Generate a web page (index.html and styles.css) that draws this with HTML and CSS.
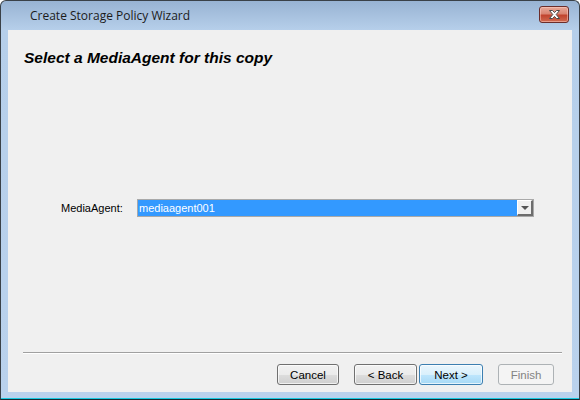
FILE: index.html
```html
<!DOCTYPE html>
<html lang="en">
<head>
  <meta charset="UTF-8">
  <title>Create Storage Policy Wizard</title>
  <link rel="stylesheet" href="styles.css">
</head>
<body>
  <div class="ventana">
    <div class="barraTitulo">
      <span class="titulo">Create Storage Policy Wizard</span>
      <button class="cerrar" aria-label="Close">
        <svg width="13" height="9" viewBox="0 0 13 9">
          <path d="M1.5 0.5 H4.5 L6.5 2.6 L8.5 0.5 H11.5 L8.2 4.5 L11.5 8.5 H8.5 L6.5 6.4 L4.5 8.5 H1.5 L4.8 4.5 Z" fill="#fff" stroke="#4a4a4a" stroke-width="1" stroke-linejoin="round"/>
        </svg>
      </button>
    </div>
    <div class="cliente">
      <h1 class="encabezado">Select a MediaAgent for this copy</h1>

      <div class="principal">
        <div class="fila">
          <label class="etiqueta" for="agente">MediaAgent:</label>
          <div class="combo" id="agente">
            <span class="comboValor">mediaagent001</span>
            <span class="comboBoton"><span class="flecha"></span></span>
          </div>
        </div>
      </div>

      <div class="pie">
        <div class="separador"></div>
        <div class="botones">
          <button class="boton cancelar">Cancel</button>
          <button class="boton atras">&lt; Back</button>
          <button class="boton activo">Next &gt;</button>
          <button class="boton deshabilitado" disabled>Finish</button>
        </div>
      </div>
    </div>
  </div>
</body>
</html>
```

FILE: styles.css
```css
html, body {
  margin: 0;
  padding: 0;
  background: #ffffff;
}
.ventana {
  width: 580px;
  height: 400px;
  box-sizing: border-box;
  border: 1px solid #3a4148;
  border-bottom-color: #1a2b33;
  border-radius: 6px 6px 0 0;
  padding: 0 7px 7px 7px;
  display: flex;
  flex-direction: column;
  background: linear-gradient(#98b3d3 0, #b6cfea 29px, #bad2ed 100%);
  box-shadow: inset 0 -1px 0 #19c9e0;
  font-family: "Liberation Sans", Arial, sans-serif;
}
.barraTitulo {
  height: 29px;
  display: flex;
  align-items: center;
  justify-content: space-between;
}
.titulo {
  padding-left: 22px;
  font-family: "Open Sans", "Liberation Sans", sans-serif;
  font-size: 12px;
  color: #1b1b1b;
  margin-top: -1px;
}
.cerrar {
  width: 30px;
  height: 17px;
  margin: -3px 3px 0 0;
  padding: 0;
  border: 1px solid #6b2d2a;
  border-radius: 3px;
  background: linear-gradient(#e8a898 0, #d98572 45%, #c1442e 55%, #cf6a50 100%);
  box-shadow: inset 0 0 0 1px rgba(255, 210, 200, 0.5);
  display: flex;
  align-items: center;
  justify-content: center;
}
.cliente {
  flex: 1;
  background: #f0f0f0;
  display: flex;
  flex-direction: column;
}
.encabezado {
  margin: 18px 0 0 16px;
  font-size: 15.5px;
  font-style: italic;
  font-weight: bold;
  line-height: 19px;
  color: #000;
}
.principal {
  flex: 1;
  padding: 132px 0 0 53px;
}
.fila {
  display: flex;
  align-items: center;
  height: 18px;
}
.etiqueta {
  width: 76px;
  font-size: 11px;
  color: #000;
}
.combo {
  width: 397px;
  height: 18px;
  box-sizing: border-box;
  border: 1px solid #a9a9a9;
  background: #3399ff;
  display: flex;
  align-items: center;
}
.comboValor {
  flex: 1;
  padding-left: 1px;
  font-size: 11px;
  color: #ffffff;
}
.comboBoton {
  width: 16px;
  height: 16px;
  box-sizing: border-box;
  background: #f0f0f0;
  border-top: 1px solid #fff;
  border-left: 1px solid #fff;
  border-right: 2px solid #6d6d6d;
  border-bottom: 2px solid #6d6d6d;
  display: flex;
  align-items: center;
  justify-content: center;
}
.flecha {
  width: 0;
  height: 0;
  border-left: 4px solid transparent;
  border-right: 4px solid transparent;
  border-top: 4px solid #555;
  margin-top: 1px;
}
.pie {
  padding: 0 10px 7px 15px;
}
.separador {
  border-top: 1px solid #a0a0a0;
  border-bottom: 1px solid #ffffff;
}
.botones {
  display: flex;
  justify-content: flex-end;
  padding: 10px 8px 0 0;
}
.boton {
  height: 21px;
  width: 63px;
  margin-left: 15px;
  padding: 0;
  border: 1px solid #707070;
  border-radius: 3px;
  background: linear-gradient(#f2f2f2 0, #ebebeb 50%, #dddddd 50%, #cfcfcf 100%);
  box-shadow: inset 0 0 0 1px rgba(255, 255, 255, 0.7);
  font-family: "Liberation Sans", Arial, sans-serif;
  font-size: 11.5px;
  color: #000;
}
.cancelar {
  width: 62px;
}
.activo {
  margin-left: 2px;
  width: 64px;
  border-color: #3c7fb1;
  background: linear-gradient(#eaf6fd 0, #d9f0fc 50%, #bee6fd 50%, #a7d9f5 100%);
}
.deshabilitado {
  width: 56px;
  border-color: #adb2b5;
  background: #f4f4f4;
  box-shadow: none;
  color: #838383;
}
```
